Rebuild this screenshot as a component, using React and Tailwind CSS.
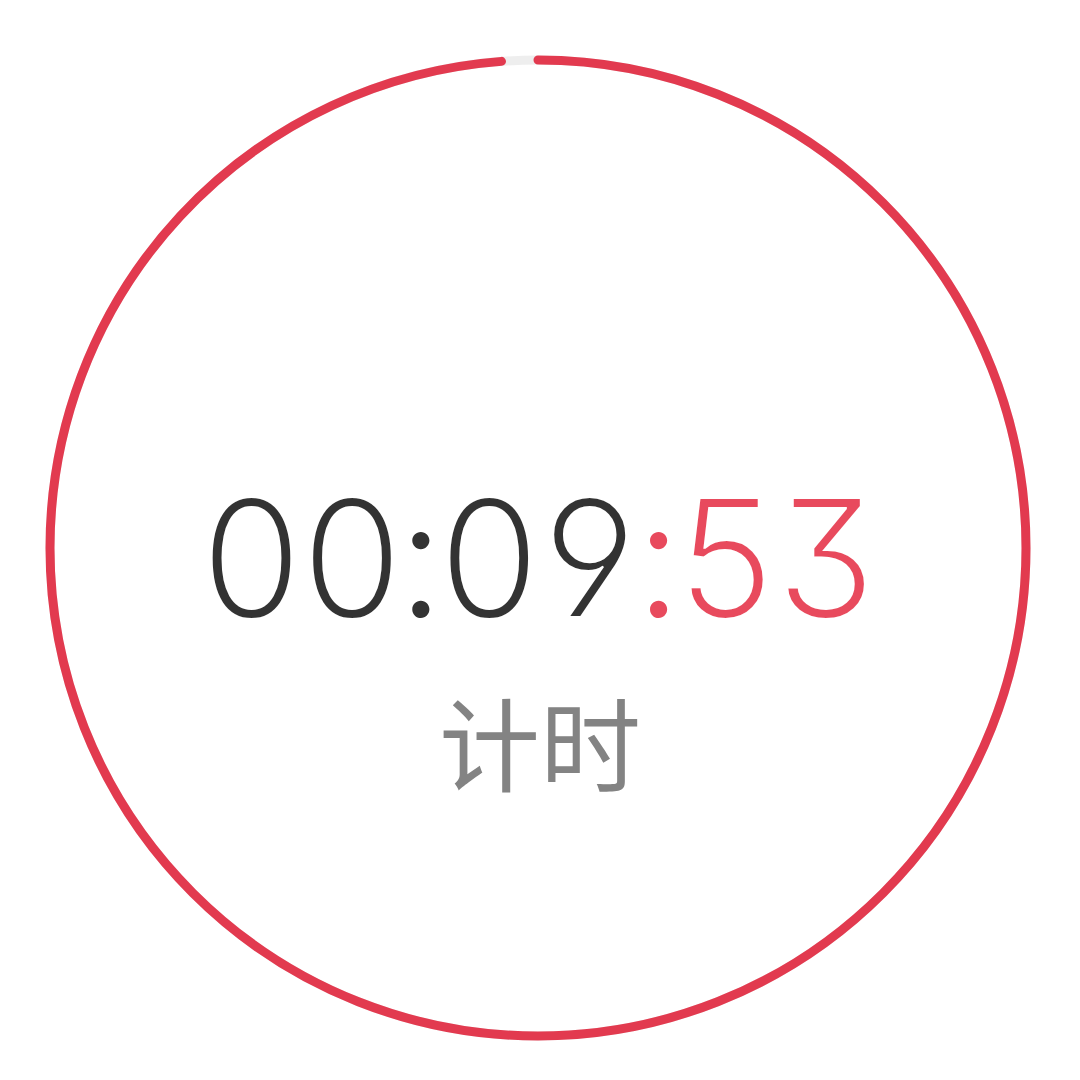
import React from "react";

export default function App() {
  const r = 488;
  const c = 2 * Math.PI * r;
  const arc = (355.65 / 360) * c;
  return (
    <div className="relative w-[1080px] h-[1080px] bg-white overflow-hidden">
      <svg className="absolute inset-0" width="1080" height="1080" viewBox="0 0 1080 1080">
        <circle cx="538" cy="548" r={r} fill="none" stroke="#eeeeee" strokeWidth="9" />
        <circle
          cx="538"
          cy="548"
          r={r}
          fill="none"
          stroke="#e23a4f"
          strokeWidth="9"
          strokeLinecap="round"
          strokeDasharray={`${arc} ${c}`}
          transform="rotate(-90 538 548)"
        />
      </svg>
      <div className="relative flex flex-col items-center pt-[476px]">
        <div className="flex pr-[6px] text-[163px] leading-none font-light tracking-[-5px] [font-feature-settings:'ss01','cv09','tnum'] font-['Inter','Liberation_Sans',sans-serif]">
          <span className="text-[#333333] [-webkit-text-stroke:2px_#ffffff]">00</span>
          <span className="text-[#333333] -mx-px">:</span>
          <span className="text-[#333333] [-webkit-text-stroke:2px_#ffffff]">09</span>
          <span className="text-[#e84a5d] -mx-px">:</span>
          <span className="text-[#e84a5d] [-webkit-text-stroke:2px_#ffffff]">53</span>
        </div>
        <div className="mt-[51px] text-[101px] leading-none text-[#838383] font-['Noto_Sans_CJK_SC',sans-serif]">
          计时
        </div>
      </div>
    </div>
  );
}
